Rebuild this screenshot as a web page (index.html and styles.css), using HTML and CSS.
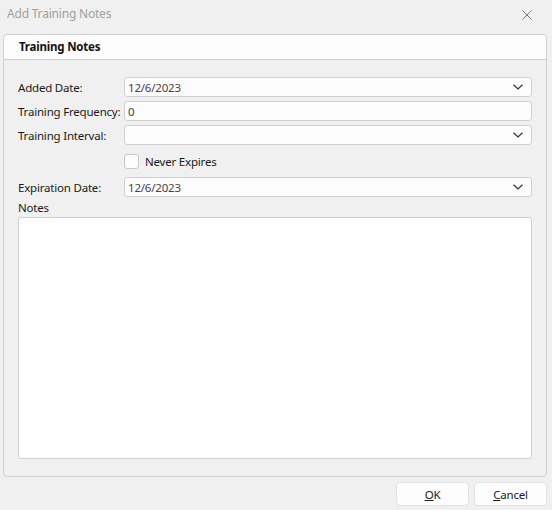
FILE: index.html
```html
<!DOCTYPE html>
<html lang="en">

<head>
    <meta charset="UTF-8">
    <meta name="viewport" content="width=device-width, initial-scale=1.0">
    <title>Add Training Notes</title>
    <link rel="stylesheet" href="styles.css">
</head>

<body>
    <div class="titlebar">
        <span class="title">Add Training Notes</span>
        <button class="close" title="Close">
            <svg width="10" height="10" viewBox="0 0 10 10">
                <path d="M0.5 0.5 L9.5 9.5 M9.5 0.5 L0.5 9.5" stroke="#7a7a7a" stroke-width="1" fill="none" />
            </svg>
        </button>
    </div>

    <div class="panel">
        <div class="panel-header">Training Notes</div>
        <div class="panel-body">
            <div class="form-grid">
                <label>Added Date:</label>
                <div class="field combo">
                    <span>12/6/2023</span>
                    <svg class="chevron" width="10" height="6" viewBox="0 0 10 6">
                        <path d="M0.5 0.8 L5 5 L9.5 0.8" stroke="#333" stroke-width="1.2" fill="none" />
                    </svg>
                </div>

                <label>Training Frequency:</label>
                <div class="field"><span>0</span></div>

                <label>Training Interval:</label>
                <div class="field combo">
                    <span></span>
                    <svg class="chevron" width="10" height="6" viewBox="0 0 10 6">
                        <path d="M0.5 0.8 L5 5 L9.5 0.8" stroke="#333" stroke-width="1.2" fill="none" />
                    </svg>
                </div>

                <span></span>
                <div class="check-row">
                    <span class="checkbox"></span>
                    <span>Never Expires</span>
                </div>

                <label>Expiration Date:</label>
                <div class="field combo">
                    <span>12/6/2023</span>
                    <svg class="chevron" width="10" height="6" viewBox="0 0 10 6">
                        <path d="M0.5 0.8 L5 5 L9.5 0.8" stroke="#333" stroke-width="1.2" fill="none" />
                    </svg>
                </div>
            </div>

            <div class="notes-label">Notes</div>
            <div class="notes"></div>
        </div>
    </div>

    <div class="buttons">
        <button class="btn"><u>O</u>K</button>
        <button class="btn"><u>C</u>ancel</button>
    </div>
</body>

</html>
```

FILE: styles.css
```css
body {
    margin: 0;
    width: 552px;
    height: 510px;
    background-color: #f0f0f0;
    font-family: "Noto Sans", "Open Sans", sans-serif;
    font-size: 11.5px;
    letter-spacing: -0.2px;
    color: #1a1a1a;
    overflow: hidden;
}

.titlebar {
    height: 34px;
    display: flex;
    align-items: flex-start;
    justify-content: space-between;
}

.title {
    margin: 5px 0 0 7px;
    font-size: 12px;
    color: #a0a0a0;
}

.close {
    margin: 10px 20px 0 0;
    padding: 0;
    border: none;
    background: none;
    width: 10px;
    height: 10px;
    display: flex;
}

.panel {
    margin: 0 5px 0 3px;
    height: 443px;
    box-sizing: border-box;
    border: 1px solid #cfcfcf;
    border-radius: 4px;
    display: flex;
    flex-direction: column;
}

.panel-header {
    height: 25px;
    box-sizing: border-box;
    padding: 4px 0 0 15px;
    background-color: #fcfcfc;
    border-bottom: 1px solid #cfcfcf;
    border-radius: 4px 4px 0 0;
    font-weight: bold;
    color: #111;
}

.panel-body {
    flex: 1;
    padding: 17px 14px 17px 14px;
    display: flex;
    flex-direction: column;
}

.form-grid {
    display: grid;
    grid-template-columns: 106px 1fr;
    grid-template-rows: 20px 20px 20px 24px 20px;
    row-gap: 4px;
    align-items: center;
}

label {
    color: #1a1a1a;
    white-space: nowrap;
}

.field {
    height: 20px;
    box-sizing: border-box;
    border: 1px solid #cfcfcf;
    border-radius: 3px;
    background-color: #fcfcfc;
    padding: 0 0 0 3px;
    display: flex;
    align-items: center;
    color: #444;
}

.combo {
    justify-content: space-between;
    padding-right: 8px;
}

.check-row {
    display: flex;
    align-items: center;
    gap: 6px;
}

.checkbox {
    width: 15px;
    height: 15px;
    box-sizing: border-box;
    border: 1px solid #c8c8c8;
    border-radius: 3px;
    background-color: #fcfcfc;
}

.notes-label {
    margin-top: 3px;
    height: 17px;
    line-height: 16px;
}

.notes {
    flex: 1;
    background-color: #fff;
    border: 1px solid #cfcfcf;
    border-radius: 3px;
}

.buttons {
    display: flex;
    justify-content: flex-end;
    gap: 5px;
    margin: 5px 5px 0 0;
}

.btn {
    width: 73px;
    height: 24px;
    padding: 0;
    border: 1px solid #e2e2e2;
    border-radius: 4px;
    background-color: #fdfdfd;
    font-family: inherit;
    font-size: 11.5px;
    letter-spacing: -0.2px;
    color: #1a1a1a;
}
```
